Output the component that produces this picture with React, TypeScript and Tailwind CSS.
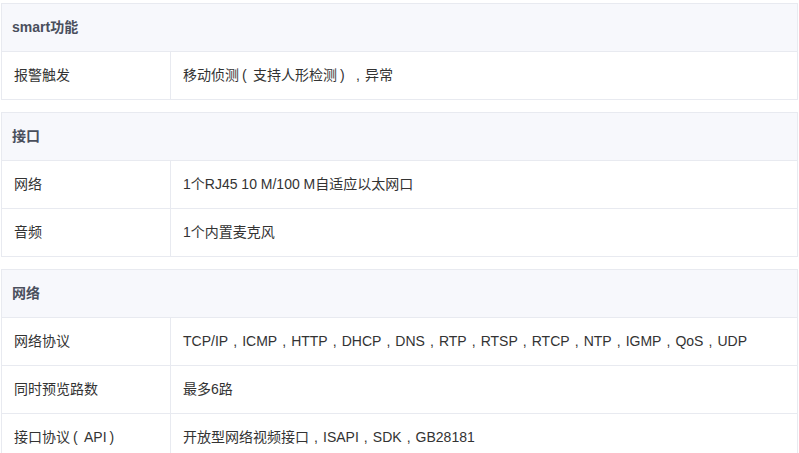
import React from "react";

type Section = { title: string; rows: [string, string][] };

const sections: Section[] = [
  { title: "smart功能", rows: [["报警触发", "移动侦测（支持人形检测），异常"]] },
  {
    title: "接口",
    rows: [
      ["网络", "1个RJ45 10 M/100 M自适应以太网口"],
      ["音频", "1个内置麦克风"],
    ],
  },
  {
    title: "网络",
    rows: [
      ["网络协议", "TCP/IP，ICMP，HTTP，DHCP，DNS，RTP，RTSP，RTCP，NTP，IGMP，QoS，UDP"],
      ["同时预览路数", "最多6路"],
      ["接口协议（API）", "开放型网络视频接口，ISAPI，SDK，GB28181"],
    ],
  },
];

const punct: Record<string, string> = { "（": "(", "）": ")", "，": "," };

function Txt({ text }: { text: string }) {
  const parts = text.split(/([（），])/);
  return (
    <span className="whitespace-nowrap">
      {parts.map((p, i) =>
        punct[p] ? (
          <span
            key={i}
            className={
              p === "，"
                ? "inline-block w-[14px] text-center"
                : p === "（"
                ? "inline-block w-[14px] text-left pl-[3px]"
                : "inline-block w-[14px] text-left pl-[3px]"
            }
          >
            {punct[p]}
          </span>
        ) : (
          <React.Fragment key={i}>{p}</React.Fragment>
        )
      )}
    </span>
  );
}

export default function App() {
  return (
    <div
      className="w-[799px] h-[453px] overflow-hidden bg-white pt-[3px] pl-[1px] pr-[1px]"
      style={{ fontFamily: '"Liberation Sans", Arial, "Noto Sans CJK SC", sans-serif' }}
    >
      <div className="flex flex-col gap-3">
        {sections.map((s) => (
          <div key={s.title} className="border border-[#e8eaf0] bg-white">
            <div className="h-[47px] flex items-center pl-[10px] bg-[#f7f8fc] text-[14px] font-bold text-[#4a4f5c]">
              {s.title}
            </div>
            {s.rows.map(([k, v]) => (
              <div key={k} className="flex h-[48px] border-t border-[#e8eaf0] text-[14px] text-[#333333]">
                <div className="w-[169px] flex items-center pl-[12px] border-r border-[#e8eaf0]">
                  <Txt text={k} />
                </div>
                <div className="flex-1 flex items-center pl-[12px]">
                  <Txt text={v} />
                </div>
              </div>
            ))}
          </div>
        ))}
      </div>
    </div>
  );
}
